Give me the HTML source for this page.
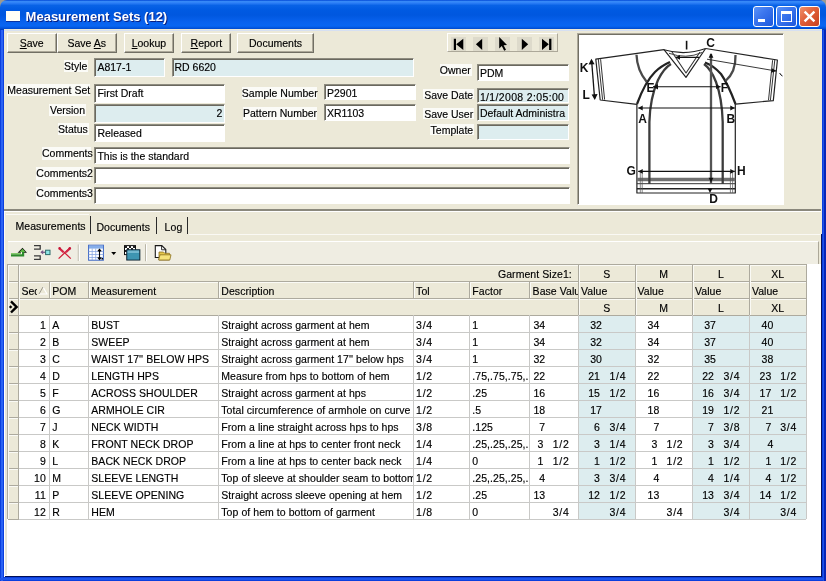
<!DOCTYPE html>
<html><head><meta charset="utf-8">
<style>
*{box-sizing:border-box}
html,body{margin:0;padding:0}
body{width:826px;height:581px;overflow:hidden;position:relative;background:#0B3FDE;font-family:"Liberation Sans",sans-serif;font-size:10.5px;color:#000}
.a{position:absolute}
#title{left:0;top:0;width:826px;height:29.6px;border-radius:7px 7px 0 0;background:linear-gradient(to bottom,#0047D6 0px,#3A8DF9 1.6px,#2C7EF6 3px,#0862E6 5.5px,#005AE2 10px,#0057DF 15px,#0862EE 22px,#0866F2 26px,#0052DA 28.3px,#003CB8 29.6px);}
#ttext{left:25.6px;top:9.3px;color:#fff;-webkit-text-stroke:0;font-weight:bold;font-size:13px;text-shadow:1px 1px 0 #0A1F80;white-space:nowrap}
#client{left:4px;top:29px;width:818px;height:548px;background:#ECE9D8}
.btn{height:19.5px;top:33.2px;background:#ECE9D8;border-top:1px solid #fff;border-left:1px solid #fff;border-right:1px solid #716F64;border-bottom:1px solid #716F64;box-shadow:inset -1px -1px 0 #ACA899;text-align:center;line-height:18.5px;white-space:nowrap}
.lbl{background:#FBFBF7;white-space:nowrap;text-align:right;line-height:12px;padding-right:1px;padding-top:0px}
.inp{background:#fff;border-top:1px solid #8E8C80;border-left:1px solid #8E8C80;border-bottom:1px solid #FFFFFF;border-right:1px solid #fff;box-shadow:inset 1px 1px 0 #6A685E;white-space:nowrap;overflow:hidden;padding-left:2px;line-height:16px}
.blue{background:#DDEDEF}
.gt{white-space:nowrap;line-height:12px;letter-spacing:0.06px}
body{-webkit-text-stroke:0.15px #000}
.ctl{top:6px;width:21px;height:21px;border:1px solid #fff;border-radius:3px}
</style></head><body><div class="a" style="left:0;top:0;width:826px;height:581px;overflow:hidden;will-change:transform">
<div class="a" style="left:0;top:0;width:8px;height:8px;background:#9C9A90"></div><div class="a" style="left:818px;top:0;width:8px;height:8px;background:#9C9A90"></div><div id="title" class="a"></div><div class="a" style="left:6px;top:10.8px;width:14.4px;height:10.3px;background:#FFFFF6;box-shadow:0 0.8px 0 #0A2A90"></div>
<div id="ttext" class="a">Measurement Sets (12)</div>
<div class="a ctl" style="left:753px;background:linear-gradient(135deg,#5B93F8 0%,#3C76EE 40%,#1D58DC 100%)"><div class="a" style="left:3.6px;top:12px;width:7.5px;height:3px;background:#fff"></div></div>
<div class="a ctl" style="left:776px;background:linear-gradient(135deg,#5B93F8 0%,#3C76EE 40%,#1D58DC 100%)"><div class="a" style="left:4px;top:4px;width:11px;height:11px;border:1px solid #fff;border-top-width:3px"></div></div>
<div class="a ctl" style="left:799px;background:linear-gradient(135deg,#F0906A 0%,#E0603A 45%,#C8401E 100%)"><svg class="a" style="left:0;top:0" width="19" height="19"><path d="M4.6 4.6 L14.4 14.4 M14.4 4.6 L4.6 14.4" stroke="#fff" stroke-width="2.4"/></svg></div>
<div class="a" style="left:1px;top:30px;width:1.5px;height:551px;background:#2A62F4"></div>
<div class="a" style="left:822.6px;top:30px;width:1.6px;height:551px;background:#1E52E6"></div>
<div class="a" style="left:0;top:578px;width:826px;height:1.5px;background:#1E55EC"></div>
<div id="client" class="a"></div>
<div class="a" style="left:4px;top:29.6px;width:818px;height:1.2px;background:#D6E0F2"></div>
<div class="a" style="left:4px;top:575.6px;width:818px;height:1.4px;background:#00105A"></div>
<div class="a" style="left:819.6px;top:264px;width:1.2px;height:312px;background:#C4C0B4"></div>
<div class="a" style="left:820.8px;top:234px;width:1.2px;height:343px;background:#00105A"></div>
<div class="a" style="left:824.4px;top:30px;width:1.6px;height:551px;background:#0626B8"></div>
<div class="a btn" style="left:7px;width:49.50px"><u>S</u>ave</div>
<div class="a btn" style="left:57px;width:59.50px">Save <u>A</u>s</div>
<div class="a btn" style="left:123.8px;width:50.20px"><u>L</u>ookup</div>
<div class="a btn" style="left:181.4px;width:49.90px"><u>R</u>eport</div>
<div class="a btn" style="left:237.3px;width:76.50px">Documents</div>
<div class="a lbl" style="left:64px;top:59.6px;width:23.50px;height:12.70px">Style</div>
<div class="a inp blue" style="left:94.4px;top:57.6px;width:70.60px;height:19.20px;">A817-1</div>
<div class="a inp blue" style="left:171.5px;top:57.6px;width:242.00px;height:19.20px;">RD 6620</div>
<div class="a lbl" style="left:7.3px;top:83.6px;width:82.70px;height:12.40px">Measurement Set</div>
<div class="a inp " style="left:94.4px;top:83.5px;width:130.90px;height:19.20px;">First Draft</div>
<div class="a lbl" style="left:49.4px;top:103.8px;width:36.60px;height:12.30px">Version</div>
<div class="a inp blue" style="left:94.4px;top:103.8px;width:130.90px;height:19.20px;text-align:right;padding-right:2px">2</div>
<div class="a lbl" style="left:58px;top:123.1px;width:30.70px;height:12.40px">Status</div>
<div class="a inp " style="left:94.4px;top:123.6px;width:130.90px;height:18.90px;">Released</div>
<div class="a lbl" style="left:42px;top:147px;width:48.70px;height:12.70px">Comments</div>
<div class="a inp " style="left:94.4px;top:147.4px;width:475.60px;height:16.90px;">This is the standard</div>
<div class="a lbl" style="left:36.3px;top:167px;width:54.40px;height:12.70px">Comments2</div>
<div class="a inp " style="left:94.4px;top:167.2px;width:475.60px;height:16.80px;"></div>
<div class="a lbl" style="left:36.3px;top:187px;width:54.40px;height:12.70px">Comments3</div>
<div class="a inp " style="left:94.4px;top:187px;width:475.60px;height:17.40px;"></div>
<div class="a lbl" style="left:241.8px;top:87.1px;width:75.20px;height:11.90px">Sample Number</div>
<div class="a inp " style="left:324px;top:83.5px;width:91.60px;height:16.90px;">P2901</div>
<div class="a lbl" style="left:243px;top:106.5px;width:74.00px;height:13.30px">Pattern Number</div>
<div class="a inp " style="left:324px;top:103.6px;width:91.60px;height:17.40px;">XR1103</div>
<div class="a lbl" style="left:439.8px;top:64.3px;width:31.90px;height:11.30px">Owner</div>
<div class="a inp " style="left:476.9px;top:63.6px;width:92.00px;height:17.70px;">PDM</div>
<div class="a lbl" style="left:423.4px;top:89px;width:50.80px;height:10.20px">Save Date</div>
<div class="a inp blue" style="left:476.9px;top:88px;width:92.00px;height:15.40px;letter-spacing:0.35px">1/1/2008 2:05:00</div>
<div class="a lbl" style="left:423.4px;top:107.5px;width:50.80px;height:11.30px">Save User</div>
<div class="a inp blue" style="left:476.9px;top:104.4px;width:92.00px;height:16.50px;">Default Administra</div>
<div class="a lbl" style="left:429.5px;top:124px;width:44.70px;height:11.30px">Template</div>
<div class="a inp blue" style="left:476.9px;top:124px;width:92.00px;height:16.40px;"></div><!-- image panel -->
<div class="a" style="left:577px;top:33px;width:206.5px;height:172px;background:#FFFFFF;border-top:1px solid #ACA899;border-left:1px solid #ACA899;border-right:1px solid #fff;border-bottom:1px solid #fff;box-shadow:inset 1px 1px 0 #716F64"></div>
<!-- nav bar -->
<div class="a" style="left:447px;top:33px;width:110.7px;height:19.4px;border-top:1px solid #fff;border-left:1px solid #fff;border-right:1px solid #ACA899;border-bottom:1px solid #ACA899"></div>
<div class="a" style="left:450.7px;top:37px;width:15.3px;height:14.3px;background:#DDDACB"></div>
<div class="a" style="left:472.7px;top:37px;width:15.3px;height:14.3px;background:#DDDACB"></div>
<div class="a" style="left:495px;top:37px;width:15.3px;height:14.3px;background:#DDDACB"></div>
<div class="a" style="left:517px;top:37px;width:15.3px;height:14.3px;background:#DDDACB"></div>
<div class="a" style="left:539px;top:37px;width:15.3px;height:14.3px;background:#DDDACB"></div>
<svg class="a" style="left:0;top:0" width="826" height="60">
<path d="M453.8 38.7 H456 V50 H453.8 Z M456.2 44.3 L463.3 38.7 V50 Z" fill="#000"/>
<path d="M475.9 44.3 L482.2 38.7 V50 Z" fill="#000"/>
<path d="M499.2 37 L499.2 48.5 L501.8 46 L504.2 50.8 L506 49.8 L503.6 45.2 L507 45 Z" fill="#000"/>
<path d="M528.2 44.3 L521.8 38.7 V50 Z" fill="#000"/>
<path d="M542 38.7 L548.8 44.3 L542 50 Z M549.1 38.7 H551.4 V50 H549.1 Z" fill="#000"/>
</svg>
<!-- splitter -->
<div class="a" style="left:4px;top:209.3px;width:817px;height:1.4px;background:#8A887C"></div>
<div class="a" style="left:4px;top:210.8px;width:817px;height:1px;background:#FFFFFF"></div>
<!-- tabs -->
<div class="a" style="left:6px;top:214.3px;width:83px;height:1px;background:#FAF9F4"></div>
<div class="a gt" style="left:15.5px;top:219.7px">Measurements</div>
<div class="a" style="left:89.5px;top:215.6px;width:1.2px;height:18.7px;background:#2A2A2A"></div>
<div class="a gt" style="left:96.4px;top:221.2px">Documents</div>
<div class="a" style="left:155.6px;top:217.3px;width:1.2px;height:17px;background:#2A2A2A"></div>
<div class="a gt" style="left:164.6px;top:221.2px">Log</div>
<div class="a" style="left:187.1px;top:217.3px;width:1.2px;height:17px;background:#2A2A2A"></div>
<div class="a" style="left:188.5px;top:233.8px;width:632px;height:1px;background:#FAF9F4"></div>
<div class="a" style="left:4px;top:212px;width:1.2px;height:365px;background:#FAF9F4"></div>
<!-- toolbar -->
<div class="a" style="left:7.6px;top:241px;width:811.5px;height:23.8px;background:#EFEDE2;border-top:1px solid #fff;border-right:1px solid #ACA899;border-bottom:1px solid #B8B5A8"></div>
<svg class="a" style="left:0;top:240px" width="200" height="26">
<!-- green arrow: bar + stem + chevron head -->
<path d="M11 14.2 H22 V11.2 H24.2 V16.5 H11 Z" fill="#2C8A2C"/>
<path d="M11 14.2 H21 V13.2 H11 Z" fill="#6CC050"/>
<path d="M17.6 12.8 L22.5 7.8 L27 12.8 L24.3 12.8 L22.5 10.6 L20.6 12.8 Z" fill="#111"/>
<path d="M19.4 12 L22.5 8.8 L25.6 12 Z" fill="#5DB845"/>
<!-- merge icon -->
<path d="M34 5.6 H40.2 V9.2 H34 M34 15.8 H40.2 V19.4 H34" fill="none" stroke="#3A3A3A" stroke-width="1.3"/>
<path d="M41 12.3 H45.5" stroke="#7A5A8A" stroke-width="1.3"/>
<path d="M40.3 12.3 L43.2 10 V14.6 Z" fill="#7A5A8A"/>
<rect x="45.6" y="10.2" width="4.4" height="4.4" fill="#8EE6E6" stroke="#2C6A6A" stroke-width="1"/>
<!-- red X pins -->
<path d="M58.6 18.6 L70.2 7.6 M70.8 18.6 L59.2 7.6" stroke="#D0203A" stroke-width="1.3"/>
<path d="M59.8 8.8 L63.5 12.3 M69.6 8.8 L65.9 12.3" stroke="#D42848" stroke-width="2.2"/>
<circle cx="59.6" cy="8.4" r="1.3" fill="#C8183A"/><circle cx="69.8" cy="8.4" r="1.3" fill="#C8183A"/>
<!-- separator -->
<rect x="77.8" y="4.5" width="1" height="16.5" fill="#B8B5A6"/><rect x="78.8" y="4.5" width="1" height="16.5" fill="#FFFFFF"/>
<!-- table icon -->
<rect x="88.6" y="5.2" width="14.8" height="15" fill="#FFFFFF" stroke="#3A64C4" stroke-width="1"/>
<rect x="89" y="5.6" width="14" height="3" fill="#86AEEA"/>
<path d="M88.6 11.5 H103.4 M88.6 14.5 H103.4 M88.6 17.5 H103.4 M92.2 8.6 V20.2 M95.7 8.6 V20.2" stroke="#7C9EE0" stroke-width="0.7"/>
<path d="M99.5 9.5 V19 M97.8 11.3 L99.5 9.3 L101.2 11.3 M97.8 17.3 L99.5 19.3 L101.2 17.3" fill="none" stroke="#000" stroke-width="1.1"/>
<rect x="101.5" y="18" width="1.5" height="1.5" fill="#000"/>
<!-- dropdown -->
<path d="M111.2 11.9 H116.2 L113.7 15 Z" fill="#000"/>
<!-- window icon -->
<rect x="124.5" y="5.6" width="11" height="9" fill="#FFFFFF" stroke="#111" stroke-width="1"/>
<path d="M125 6 h2 v2 h-2z M129 6 h2 v2 h-2z M133 6 h2 v2 h-2z M127 8 h2 v2 h-2z M131 8 h2 v2 h-2z M125 10 h2 v2 h-2z M129 10 h2 v2 h-2z M133 10 h2 v2 h-2z M127 12 h2 v2 h-2z M131 12 h2 v2 h-2z" fill="#222"/>
<rect x="126.8" y="9.8" width="13" height="10.2" fill="#2F7F9C" stroke="#112838" stroke-width="1.1"/>
<rect x="127.5" y="10.5" width="11.6" height="2.6" fill="#74B8D0"/>
<rect x="127.5" y="13.1" width="11.6" height="6.3" fill="#3E95B2"/>
<!-- separator -->
<rect x="145" y="4.2" width="1" height="17" fill="#B8B5A6"/><rect x="146" y="4.2" width="1" height="17" fill="#FFFFFF"/>
<!-- doc + folder icon -->
<path d="M155.3 5.6 H161.8 L165.8 9.6 V17.5 H155.3 Z" fill="#FFFFFF" stroke="#1A1A1A" stroke-width="1.1"/>
<path d="M161.6 5.8 V9.8 H165.6" fill="none" stroke="#1A1A1A" stroke-width="0.9"/>
<path d="M159 12 H163.5 L164.8 13.3 H169.5 V20 H159 Z" fill="#E6C64A" stroke="#8A7020" stroke-width="0.8"/>
<path d="M158.6 20 L160 14.8 H171 L169.8 20 Z" fill="#F6E27A" stroke="#8A7020" stroke-width="0.8"/>
</svg>
<svg class="a" style="left:578px;top:34px" width="204.5" height="171" viewBox="578 34 204.5 171">
<g fill="none" stroke-linejoin="round" stroke-linecap="butt">
<!-- left sleeve -->
<path d="M664 49.7 L595.8 59.2 L600.2 100 L636.8 104.3" stroke="#222" stroke-width="1.2"/>
<path d="M598.3 59 L602.6 99.8 M600.6 59.2 L604.6 99.6" stroke="#333" stroke-width="1"/>
<!-- right sleeve -->
<path d="M705.6 48.5 L777.4 60 L773.3 100.6 L735.5 104.2" stroke="#222" stroke-width="1.2"/>
<path d="M774.8 60 L770.4 100.4 M772.6 60.2 L768.5 100.2" stroke="#333" stroke-width="1"/>
<!-- body sides -->
<path d="M636.9 104 V193 H735.3 V104" stroke="#222" stroke-width="1.2"/>
<!-- hem -->
<path d="M636.9 179.5 H735.3" stroke="#707070" stroke-width="3.4"/>
<path d="M636.9 183.7 H735.3" stroke="#333" stroke-width="1"/>
<path d="M636.9 188.8 H735.3" stroke="#222" stroke-width="1.5"/>
<path d="M640.3 172 V193 M642.2 172 V193 M730.4 172 V193 M732.6 172 V193" stroke="#555" stroke-width="0.7"/>
<!-- inner verticals -->
<path d="M649.4 184 V122 Q650 98 658 80 Q664 68 671 64" stroke="#3C3C3C" stroke-width="2.3"/>
<path d="M722.7 184 V122 Q722 98 716 82 Q711 69 704 64" stroke="#3C3C3C" stroke-width="2.3"/>
<!-- armhole curves -->
<path d="M637 104 Q645 82 655 72 Q661 66 670 62" stroke="#222" stroke-width="2.2"/>
<path d="M735.5 104 Q728 84 721 74 Q714 66 705 62.5" stroke="#222" stroke-width="2.2"/>
<!-- sleeve seams -->
<path d="M636.5 54.7 Q637 70 646.8 82" stroke="#4A4A4A" stroke-width="2.3"/>
<path d="M735.5 55 Q736 72 725.5 81" stroke="#4A4A4A" stroke-width="2.3"/>
<!-- collar -->
<path d="M664 49.7 L686 77.3 L705.6 48.5" stroke="#222" stroke-width="1.2"/>
<path d="M672 52 L686 73 L700 52" stroke="#333" stroke-width="1.1"/>
<path d="M664 49.7 Q685 56 705.6 48.5" stroke="#222" stroke-width="1.1"/>
<path d="M669 53.3 Q686 59.5 702 52.5" stroke="#444" stroke-width="1"/>
<!-- C line -->
<path d="M711 54 V183" stroke="#777" stroke-width="2.4"/>
<path d="M711 54 V183" stroke="#222" stroke-width="0.8"/>
<!-- J line -->
<path d="M707 59.2 L776 71" stroke="#222" stroke-width="0.9"/>
<!-- K arrow -->
<path d="M591.6 60.5 L594.6 98.5" stroke="#111" stroke-width="1.3"/>
<!-- horizontal arrows -->
<path d="M653 86.7 H720.6 M638.2 108 H734.8 M638.2 171.4 H734.8 M676 57.4 H699" stroke="#111" stroke-width="1.1"/>
</g>
<g fill="#111">
<!-- arrowheads -->
<path d="M653 86.7 L658 84 V89.4 Z M720.6 86.7 L716.1 84.3 V89.1 Z"/>
<path d="M638.2 108 L642.7 105.6 V110.4 Z M734.8 108 L730.3 105.6 V110.4 Z"/>
<path d="M638.2 171.4 L642.7 169 V173.8 Z M734.8 171.4 L730.3 169 V173.8 Z"/>
<path d="M675.5 57.4 L680 55 V59.8 Z"/>
<path d="M711 53 L708.6 57.8 H713.4 Z M711 182.5 L708.6 177.8 H713.4 Z M710 193 L707.6 188.3 H712.4 Z"/>
<path d="M591.4 58.8 L588.6 64.6 L594.6 64.2 Z M594.8 100 L591.6 94.4 L597.6 94 Z"/>
<path d="M776.5 71 L771.9 68.3 L771.2 72.8 Z"/>
</g>
<g font-family="Liberation Sans" font-weight="bold" font-size="12px" fill="#111">
<text x="579.8" y="72.4">K</text>
<text x="582.6" y="98.8">L</text>
<text x="646.5" y="92">E</text>
<text x="720.8" y="92">F</text>
<text x="638.2" y="122.8">A</text>
<text x="726.5" y="122.8">B</text>
<text x="626.6" y="175.4">G</text>
<text x="737" y="175.4">H</text>
<text x="709.3" y="203.3">D</text>
<text x="706.3" y="47.2">C</text>
</g>
<path d="M686.6 40.8 V49.5" stroke="#111" stroke-width="1.6"/>
<path d="M779.6 73 Q781 75.5 782.5 76" stroke="#111" stroke-width="1" fill="none"/>
</svg>
<div class="a" style="left:4px;top:264px;width:817px;height:311.6px;background:#FFFFFF"></div>
<div class="a" style="left:5px;top:264px;width:1.5px;height:311px;background:#E6E4DA"></div>
<div class="a" style="left:578.5px;top:315.4px;width:56.5px;height:204.0px;background:#DDEDEF"></div>
<div class="a" style="left:692.5px;top:315.4px;width:56.89999999999998px;height:204.0px;background:#DDEDEF"></div>
<div class="a" style="left:749.4px;top:315.4px;width:56.80000000000007px;height:204.0px;background:#DDEDEF"></div>
<div class="a" style="left:7.7px;top:264.2px;width:10.900000000000002px;height:255.2px;background:#ECE9D8"></div>
<div class="a" style="left:18.6px;top:264.2px;width:787.6px;height:51.19999999999999px;background:#ECE9D8"></div>
<div class="a" style="left:7.7px;top:263.7px;width:798.5px;height:1px;background:#ADAA9E"></div>
<div class="a" style="left:8.7px;top:264.7px;width:797.5px;height:1px;background:#FAFAF5"></div>
<div class="a" style="left:7.7px;top:281.0px;width:798.5px;height:1px;background:#ADAA9E"></div>
<div class="a" style="left:8.7px;top:282.0px;width:797.5px;height:1px;background:#FAFAF5"></div>
<div class="a" style="left:7.7px;top:297.8px;width:798.5px;height:1px;background:#ADAA9E"></div>
<div class="a" style="left:8.7px;top:298.8px;width:797.5px;height:1px;background:#FAFAF5"></div>
<div class="a" style="left:7.7px;top:314.9px;width:798.5px;height:1px;background:#ADAA9E"></div>
<div class="a" style="left:7.7px;top:331.9px;width:10.900000000000002px;height:1px;background:#ADAA9E"></div>
<div class="a" style="left:18.6px;top:331.9px;width:787.6px;height:1px;background:#C9C9C7"></div>
<div class="a" style="left:8.7px;top:332.9px;width:9.400000000000002px;height:1px;background:#FAFAF5"></div>
<div class="a" style="left:7.7px;top:348.9px;width:10.900000000000002px;height:1px;background:#ADAA9E"></div>
<div class="a" style="left:18.6px;top:348.9px;width:787.6px;height:1px;background:#C9C9C7"></div>
<div class="a" style="left:8.7px;top:349.9px;width:9.400000000000002px;height:1px;background:#FAFAF5"></div>
<div class="a" style="left:7.7px;top:365.9px;width:10.900000000000002px;height:1px;background:#ADAA9E"></div>
<div class="a" style="left:18.6px;top:365.9px;width:787.6px;height:1px;background:#C9C9C7"></div>
<div class="a" style="left:8.7px;top:366.9px;width:9.400000000000002px;height:1px;background:#FAFAF5"></div>
<div class="a" style="left:7.7px;top:382.9px;width:10.900000000000002px;height:1px;background:#ADAA9E"></div>
<div class="a" style="left:18.6px;top:382.9px;width:787.6px;height:1px;background:#C9C9C7"></div>
<div class="a" style="left:8.7px;top:383.9px;width:9.400000000000002px;height:1px;background:#FAFAF5"></div>
<div class="a" style="left:7.7px;top:399.9px;width:10.900000000000002px;height:1px;background:#ADAA9E"></div>
<div class="a" style="left:18.6px;top:399.9px;width:787.6px;height:1px;background:#C9C9C7"></div>
<div class="a" style="left:8.7px;top:400.9px;width:9.400000000000002px;height:1px;background:#FAFAF5"></div>
<div class="a" style="left:7.7px;top:416.9px;width:10.900000000000002px;height:1px;background:#ADAA9E"></div>
<div class="a" style="left:18.6px;top:416.9px;width:787.6px;height:1px;background:#C9C9C7"></div>
<div class="a" style="left:8.7px;top:417.9px;width:9.400000000000002px;height:1px;background:#FAFAF5"></div>
<div class="a" style="left:7.7px;top:433.9px;width:10.900000000000002px;height:1px;background:#ADAA9E"></div>
<div class="a" style="left:18.6px;top:433.9px;width:787.6px;height:1px;background:#C9C9C7"></div>
<div class="a" style="left:8.7px;top:434.9px;width:9.400000000000002px;height:1px;background:#FAFAF5"></div>
<div class="a" style="left:7.7px;top:450.9px;width:10.900000000000002px;height:1px;background:#ADAA9E"></div>
<div class="a" style="left:18.6px;top:450.9px;width:787.6px;height:1px;background:#C9C9C7"></div>
<div class="a" style="left:8.7px;top:451.9px;width:9.400000000000002px;height:1px;background:#FAFAF5"></div>
<div class="a" style="left:7.7px;top:467.9px;width:10.900000000000002px;height:1px;background:#ADAA9E"></div>
<div class="a" style="left:18.6px;top:467.9px;width:787.6px;height:1px;background:#C9C9C7"></div>
<div class="a" style="left:8.7px;top:468.9px;width:9.400000000000002px;height:1px;background:#FAFAF5"></div>
<div class="a" style="left:7.7px;top:484.9px;width:10.900000000000002px;height:1px;background:#ADAA9E"></div>
<div class="a" style="left:18.6px;top:484.9px;width:787.6px;height:1px;background:#C9C9C7"></div>
<div class="a" style="left:8.7px;top:485.9px;width:9.400000000000002px;height:1px;background:#FAFAF5"></div>
<div class="a" style="left:7.7px;top:501.9px;width:10.900000000000002px;height:1px;background:#ADAA9E"></div>
<div class="a" style="left:18.6px;top:501.9px;width:787.6px;height:1px;background:#C9C9C7"></div>
<div class="a" style="left:8.7px;top:502.9px;width:9.400000000000002px;height:1px;background:#FAFAF5"></div>
<div class="a" style="left:7.7px;top:518.9px;width:10.900000000000002px;height:1px;background:#ADAA9E"></div>
<div class="a" style="left:18.6px;top:518.9px;width:787.6px;height:1px;background:#C9C9C7"></div>
<div class="a" style="left:7.2px;top:264.2px;width:1px;height:51.19999999999999px;background:#ADAA9E"></div>
<div class="a" style="left:8.2px;top:264.7px;width:1px;height:50.19999999999999px;background:#FAFAF5"></div>
<div class="a" style="left:7.2px;top:315.4px;width:1px;height:204.0px;background:#ADAA9E"></div>
<div class="a" style="left:8.2px;top:315.4px;width:1px;height:204.0px;background:#FAFAF5"></div>
<div class="a" style="left:18.1px;top:264.2px;width:1px;height:51.19999999999999px;background:#ADAA9E"></div>
<div class="a" style="left:19.1px;top:264.7px;width:1px;height:50.19999999999999px;background:#FAFAF5"></div>
<div class="a" style="left:18.1px;top:315.4px;width:1px;height:204.0px;background:#ADAA9E"></div>
<div class="a" style="left:49.0px;top:281.5px;width:1px;height:16.80000000000001px;background:#ADAA9E"></div>
<div class="a" style="left:50.0px;top:282.0px;width:1px;height:15.800000000000011px;background:#FAFAF5"></div>
<div class="a" style="left:49.0px;top:315.4px;width:1px;height:204.0px;background:#C9C9C7"></div>
<div class="a" style="left:88.0px;top:281.5px;width:1px;height:16.80000000000001px;background:#ADAA9E"></div>
<div class="a" style="left:89.0px;top:282.0px;width:1px;height:15.800000000000011px;background:#FAFAF5"></div>
<div class="a" style="left:88.0px;top:315.4px;width:1px;height:204.0px;background:#C9C9C7"></div>
<div class="a" style="left:218.0px;top:281.5px;width:1px;height:16.80000000000001px;background:#ADAA9E"></div>
<div class="a" style="left:219.0px;top:282.0px;width:1px;height:15.800000000000011px;background:#FAFAF5"></div>
<div class="a" style="left:218.0px;top:315.4px;width:1px;height:204.0px;background:#C9C9C7"></div>
<div class="a" style="left:412.8px;top:281.5px;width:1px;height:16.80000000000001px;background:#ADAA9E"></div>
<div class="a" style="left:413.8px;top:282.0px;width:1px;height:15.800000000000011px;background:#FAFAF5"></div>
<div class="a" style="left:412.8px;top:315.4px;width:1px;height:204.0px;background:#C9C9C7"></div>
<div class="a" style="left:469.0px;top:281.5px;width:1px;height:16.80000000000001px;background:#ADAA9E"></div>
<div class="a" style="left:470.0px;top:282.0px;width:1px;height:15.800000000000011px;background:#FAFAF5"></div>
<div class="a" style="left:469.0px;top:315.4px;width:1px;height:204.0px;background:#C9C9C7"></div>
<div class="a" style="left:529.3px;top:281.5px;width:1px;height:16.80000000000001px;background:#ADAA9E"></div>
<div class="a" style="left:530.3px;top:282.0px;width:1px;height:15.800000000000011px;background:#FAFAF5"></div>
<div class="a" style="left:529.3px;top:315.4px;width:1px;height:204.0px;background:#C9C9C7"></div>
<div class="a" style="left:578.0px;top:264.2px;width:1px;height:51.19999999999999px;background:#ADAA9E"></div>
<div class="a" style="left:579.0px;top:264.7px;width:1px;height:50.19999999999999px;background:#FAFAF5"></div>
<div class="a" style="left:578.0px;top:315.4px;width:1px;height:204.0px;background:#C9C9C7"></div>
<div class="a" style="left:634.5px;top:264.2px;width:1px;height:51.19999999999999px;background:#ADAA9E"></div>
<div class="a" style="left:635.5px;top:264.7px;width:1px;height:50.19999999999999px;background:#FAFAF5"></div>
<div class="a" style="left:634.5px;top:315.4px;width:1px;height:204.0px;background:#C9C9C7"></div>
<div class="a" style="left:692.0px;top:264.2px;width:1px;height:51.19999999999999px;background:#ADAA9E"></div>
<div class="a" style="left:693.0px;top:264.7px;width:1px;height:50.19999999999999px;background:#FAFAF5"></div>
<div class="a" style="left:692.0px;top:315.4px;width:1px;height:204.0px;background:#C9C9C7"></div>
<div class="a" style="left:748.9px;top:264.2px;width:1px;height:51.19999999999999px;background:#ADAA9E"></div>
<div class="a" style="left:749.9px;top:264.7px;width:1px;height:50.19999999999999px;background:#FAFAF5"></div>
<div class="a" style="left:748.9px;top:315.4px;width:1px;height:204.0px;background:#C9C9C7"></div>
<div class="a" style="left:805.7px;top:264.2px;width:1px;height:51.19999999999999px;background:#ADAA9E"></div>
<div class="a" style="left:805.7px;top:315.4px;width:1px;height:204.0px;background:#C9C9C7"></div>
<div class="a gt" style="left:18.6px;top:267.59999999999997px;width:553.1999999999999px;text-align:right">Garment Size1:</div>
<div class="a gt" style="left:578.5px;top:267.59999999999997px;width:56.5px;text-align:center">S</div>
<div class="a gt" style="left:578.5px;top:301.7px;width:56.5px;text-align:center">S</div>
<div class="a gt" style="left:581.0px;top:284.9px;">Value</div>
<div class="a gt" style="left:635.0px;top:267.59999999999997px;width:57.5px;text-align:center">M</div>
<div class="a gt" style="left:635.0px;top:301.7px;width:57.5px;text-align:center">M</div>
<div class="a gt" style="left:637.5px;top:284.9px;">Value</div>
<div class="a gt" style="left:692.5px;top:267.59999999999997px;width:56.89999999999998px;text-align:center">L</div>
<div class="a gt" style="left:692.5px;top:301.7px;width:56.89999999999998px;text-align:center">L</div>
<div class="a gt" style="left:695.0px;top:284.9px;">Value</div>
<div class="a gt" style="left:749.4px;top:267.59999999999997px;width:56.80000000000007px;text-align:center">XL</div>
<div class="a gt" style="left:749.4px;top:301.7px;width:56.80000000000007px;text-align:center">XL</div>
<div class="a gt" style="left:751.9px;top:284.9px;">Value</div>
<div class="a gt" style="left:21.400000000000002px;top:284.9px;width:15.2px;overflow:hidden">Seq</div>
<div class="a gt" style="left:52.3px;top:284.9px;width:36.2px;overflow:hidden">POM</div>
<div class="a gt" style="left:91.3px;top:284.9px;width:127.2px;overflow:hidden">Measurement</div>
<div class="a gt" style="left:221.3px;top:284.9px;width:192.0px;overflow:hidden">Description</div>
<div class="a gt" style="left:416.1px;top:284.9px;width:53.39999999999999px;overflow:hidden">Tol</div>
<div class="a gt" style="left:472.3px;top:284.9px;width:57.49999999999996px;overflow:hidden">Factor</div>
<div class="a gt" style="left:532.5999999999999px;top:284.9px;width:45.90000000000005px;overflow:hidden">Base Value</div>
<svg class="a" style="left:38px;top:286px" width="10" height="9"><path d="M5 1 L9 8 L1 8" fill="none" stroke="#FFFFFF" stroke-width="1.2"/><path d="M1 8 L5 1" fill="none" stroke="#9A978A" stroke-width="1"/></svg>
<svg class="a" style="left:0px;top:296px" width="20" height="20"><path d="M11 5.3 L16.6 10.9 L11 16.5" fill="none" stroke="#000" stroke-width="2.4"/><path d="M10.6 9.2 L12.3 10.9 L10.6 12.6 L8.9 10.9 Z" fill="#000"/></svg>
<div class="a gt" style="left:18.6px;top:318.79999999999995px;width:27.299999999999997px;text-align:right">1</div>
<div class="a gt" style="left:52.3px;top:318.79999999999995px;width:36.2px;overflow:hidden">A</div>
<div class="a gt" style="left:91.3px;top:318.79999999999995px;width:127.2px;overflow:hidden">BUST</div>
<div class="a gt" style="left:221.3px;top:318.79999999999995px;width:192.0px;overflow:hidden">Straight across garment at hem</div>
<div class="a gt" style="left:416.1px;top:318.79999999999995px;letter-spacing:0.7px;width:53.39999999999999px;overflow:hidden">3/4</div>
<div class="a gt" style="left:472.3px;top:318.79999999999995px;width:57.49999999999996px;overflow:hidden">1</div>
<div class="a gt" style="left:505.20000000000005px;top:318.79999999999995px;width:40px;text-align:right">34</div>
<div class="a gt" style="left:562.0px;top:318.79999999999995px;width:40px;text-align:right">32</div>
<div class="a gt" style="left:619.3px;top:318.79999999999995px;width:40px;text-align:right">34</div>
<div class="a gt" style="left:676.0px;top:318.79999999999995px;width:40px;text-align:right">37</div>
<div class="a gt" style="left:733.3px;top:318.79999999999995px;width:40px;text-align:right">40</div>
<div class="a gt" style="left:18.6px;top:335.79999999999995px;width:27.299999999999997px;text-align:right">2</div>
<div class="a gt" style="left:52.3px;top:335.79999999999995px;width:36.2px;overflow:hidden">B</div>
<div class="a gt" style="left:91.3px;top:335.79999999999995px;width:127.2px;overflow:hidden">SWEEP</div>
<div class="a gt" style="left:221.3px;top:335.79999999999995px;width:192.0px;overflow:hidden">Straight across garment at hem</div>
<div class="a gt" style="left:416.1px;top:335.79999999999995px;letter-spacing:0.7px;width:53.39999999999999px;overflow:hidden">3/4</div>
<div class="a gt" style="left:472.3px;top:335.79999999999995px;width:57.49999999999996px;overflow:hidden">1</div>
<div class="a gt" style="left:505.20000000000005px;top:335.79999999999995px;width:40px;text-align:right">34</div>
<div class="a gt" style="left:562.0px;top:335.79999999999995px;width:40px;text-align:right">32</div>
<div class="a gt" style="left:619.3px;top:335.79999999999995px;width:40px;text-align:right">34</div>
<div class="a gt" style="left:676.0px;top:335.79999999999995px;width:40px;text-align:right">37</div>
<div class="a gt" style="left:733.3px;top:335.79999999999995px;width:40px;text-align:right">40</div>
<div class="a gt" style="left:18.6px;top:352.79999999999995px;width:27.299999999999997px;text-align:right">3</div>
<div class="a gt" style="left:52.3px;top:352.79999999999995px;width:36.2px;overflow:hidden">C</div>
<div class="a gt" style="left:91.3px;top:352.79999999999995px;width:127.2px;overflow:hidden">WAIST 17'' BELOW HPS</div>
<div class="a gt" style="left:221.3px;top:352.79999999999995px;width:192.0px;overflow:hidden">Straight across garment 17'' below hps</div>
<div class="a gt" style="left:416.1px;top:352.79999999999995px;letter-spacing:0.7px;width:53.39999999999999px;overflow:hidden">3/4</div>
<div class="a gt" style="left:472.3px;top:352.79999999999995px;width:57.49999999999996px;overflow:hidden">1</div>
<div class="a gt" style="left:505.20000000000005px;top:352.79999999999995px;width:40px;text-align:right">32</div>
<div class="a gt" style="left:562.0px;top:352.79999999999995px;width:40px;text-align:right">30</div>
<div class="a gt" style="left:619.3px;top:352.79999999999995px;width:40px;text-align:right">32</div>
<div class="a gt" style="left:676.0px;top:352.79999999999995px;width:40px;text-align:right">35</div>
<div class="a gt" style="left:733.3px;top:352.79999999999995px;width:40px;text-align:right">38</div>
<div class="a gt" style="left:18.6px;top:369.79999999999995px;width:27.299999999999997px;text-align:right">4</div>
<div class="a gt" style="left:52.3px;top:369.79999999999995px;width:36.2px;overflow:hidden">D</div>
<div class="a gt" style="left:91.3px;top:369.79999999999995px;width:127.2px;overflow:hidden">LENGTH HPS</div>
<div class="a gt" style="left:221.3px;top:369.79999999999995px;width:192.0px;overflow:hidden">Measure from hps to bottom of hem</div>
<div class="a gt" style="left:416.1px;top:369.79999999999995px;letter-spacing:0.7px;width:53.39999999999999px;overflow:hidden">1/2</div>
<div class="a gt" style="left:472.3px;top:369.79999999999995px;width:57.49999999999996px;overflow:hidden">.75,.75,.75,.</div>
<div class="a gt" style="left:505.20000000000005px;top:369.79999999999995px;width:40px;text-align:right">22</div>
<div class="a gt" style="left:560.0px;top:369.79999999999995px;width:40px;text-align:right">21</div>
<div class="a gt" style="left:609.5px;top:369.79999999999995px;letter-spacing:0.7px">1/4</div>
<div class="a gt" style="left:619.3px;top:369.79999999999995px;width:40px;text-align:right">22</div>
<div class="a gt" style="left:674.0px;top:369.79999999999995px;width:40px;text-align:right">22</div>
<div class="a gt" style="left:723.5px;top:369.79999999999995px;letter-spacing:0.7px">3/4</div>
<div class="a gt" style="left:731.3px;top:369.79999999999995px;width:40px;text-align:right">23</div>
<div class="a gt" style="left:780.3px;top:369.79999999999995px;letter-spacing:0.7px">1/2</div>
<div class="a gt" style="left:18.6px;top:386.79999999999995px;width:27.299999999999997px;text-align:right">5</div>
<div class="a gt" style="left:52.3px;top:386.79999999999995px;width:36.2px;overflow:hidden">F</div>
<div class="a gt" style="left:91.3px;top:386.79999999999995px;width:127.2px;overflow:hidden">ACROSS SHOULDER</div>
<div class="a gt" style="left:221.3px;top:386.79999999999995px;width:192.0px;overflow:hidden">Straight across garment at hps</div>
<div class="a gt" style="left:416.1px;top:386.79999999999995px;letter-spacing:0.7px;width:53.39999999999999px;overflow:hidden">1/2</div>
<div class="a gt" style="left:472.3px;top:386.79999999999995px;width:57.49999999999996px;overflow:hidden">.25</div>
<div class="a gt" style="left:505.20000000000005px;top:386.79999999999995px;width:40px;text-align:right">16</div>
<div class="a gt" style="left:560.0px;top:386.79999999999995px;width:40px;text-align:right">15</div>
<div class="a gt" style="left:609.5px;top:386.79999999999995px;letter-spacing:0.7px">1/2</div>
<div class="a gt" style="left:619.3px;top:386.79999999999995px;width:40px;text-align:right">16</div>
<div class="a gt" style="left:674.0px;top:386.79999999999995px;width:40px;text-align:right">16</div>
<div class="a gt" style="left:723.5px;top:386.79999999999995px;letter-spacing:0.7px">3/4</div>
<div class="a gt" style="left:731.3px;top:386.79999999999995px;width:40px;text-align:right">17</div>
<div class="a gt" style="left:780.3px;top:386.79999999999995px;letter-spacing:0.7px">1/2</div>
<div class="a gt" style="left:18.6px;top:403.79999999999995px;width:27.299999999999997px;text-align:right">6</div>
<div class="a gt" style="left:52.3px;top:403.79999999999995px;width:36.2px;overflow:hidden">G</div>
<div class="a gt" style="left:91.3px;top:403.79999999999995px;width:127.2px;overflow:hidden">ARMHOLE CIR</div>
<div class="a gt" style="left:221.3px;top:403.79999999999995px;width:192.0px;overflow:hidden">Total circumference of armhole on curve</div>
<div class="a gt" style="left:416.1px;top:403.79999999999995px;letter-spacing:0.7px;width:53.39999999999999px;overflow:hidden">1/2</div>
<div class="a gt" style="left:472.3px;top:403.79999999999995px;width:57.49999999999996px;overflow:hidden">.5</div>
<div class="a gt" style="left:505.20000000000005px;top:403.79999999999995px;width:40px;text-align:right">18</div>
<div class="a gt" style="left:562.0px;top:403.79999999999995px;width:40px;text-align:right">17</div>
<div class="a gt" style="left:619.3px;top:403.79999999999995px;width:40px;text-align:right">18</div>
<div class="a gt" style="left:674.0px;top:403.79999999999995px;width:40px;text-align:right">19</div>
<div class="a gt" style="left:723.5px;top:403.79999999999995px;letter-spacing:0.7px">1/2</div>
<div class="a gt" style="left:733.3px;top:403.79999999999995px;width:40px;text-align:right">21</div>
<div class="a gt" style="left:18.6px;top:420.79999999999995px;width:27.299999999999997px;text-align:right">7</div>
<div class="a gt" style="left:52.3px;top:420.79999999999995px;width:36.2px;overflow:hidden">J</div>
<div class="a gt" style="left:91.3px;top:420.79999999999995px;width:127.2px;overflow:hidden">NECK WIDTH</div>
<div class="a gt" style="left:221.3px;top:420.79999999999995px;width:192.0px;overflow:hidden">From a line straight across hps to hps</div>
<div class="a gt" style="left:416.1px;top:420.79999999999995px;letter-spacing:0.7px;width:53.39999999999999px;overflow:hidden">3/8</div>
<div class="a gt" style="left:472.3px;top:420.79999999999995px;width:57.49999999999996px;overflow:hidden">.125</div>
<div class="a gt" style="left:505.20000000000005px;top:420.79999999999995px;width:40px;text-align:right">7</div>
<div class="a gt" style="left:560.0px;top:420.79999999999995px;width:40px;text-align:right">6</div>
<div class="a gt" style="left:609.5px;top:420.79999999999995px;letter-spacing:0.7px">3/4</div>
<div class="a gt" style="left:619.3px;top:420.79999999999995px;width:40px;text-align:right">7</div>
<div class="a gt" style="left:674.0px;top:420.79999999999995px;width:40px;text-align:right">7</div>
<div class="a gt" style="left:723.5px;top:420.79999999999995px;letter-spacing:0.7px">3/8</div>
<div class="a gt" style="left:731.3px;top:420.79999999999995px;width:40px;text-align:right">7</div>
<div class="a gt" style="left:780.3px;top:420.79999999999995px;letter-spacing:0.7px">3/4</div>
<div class="a gt" style="left:18.6px;top:437.79999999999995px;width:27.299999999999997px;text-align:right">8</div>
<div class="a gt" style="left:52.3px;top:437.79999999999995px;width:36.2px;overflow:hidden">K</div>
<div class="a gt" style="left:91.3px;top:437.79999999999995px;width:127.2px;overflow:hidden">FRONT NECK DROP</div>
<div class="a gt" style="left:221.3px;top:437.79999999999995px;width:192.0px;overflow:hidden">From a line at hps to center front neck</div>
<div class="a gt" style="left:416.1px;top:437.79999999999995px;letter-spacing:0.7px;width:53.39999999999999px;overflow:hidden">1/4</div>
<div class="a gt" style="left:472.3px;top:437.79999999999995px;width:57.49999999999996px;overflow:hidden">.25,.25,.25,.</div>
<div class="a gt" style="left:503.4px;top:437.79999999999995px;width:40px;text-align:right">3</div>
<div class="a gt" style="left:552.8px;top:437.79999999999995px;letter-spacing:0.7px">1/2</div>
<div class="a gt" style="left:560.0px;top:437.79999999999995px;width:40px;text-align:right">3</div>
<div class="a gt" style="left:609.5px;top:437.79999999999995px;letter-spacing:0.7px">1/4</div>
<div class="a gt" style="left:617.3px;top:437.79999999999995px;width:40px;text-align:right">3</div>
<div class="a gt" style="left:666.6px;top:437.79999999999995px;letter-spacing:0.7px">1/2</div>
<div class="a gt" style="left:674.0px;top:437.79999999999995px;width:40px;text-align:right">3</div>
<div class="a gt" style="left:723.5px;top:437.79999999999995px;letter-spacing:0.7px">3/4</div>
<div class="a gt" style="left:733.3px;top:437.79999999999995px;width:40px;text-align:right">4</div>
<div class="a gt" style="left:18.6px;top:454.79999999999995px;width:27.299999999999997px;text-align:right">9</div>
<div class="a gt" style="left:52.3px;top:454.79999999999995px;width:36.2px;overflow:hidden">L</div>
<div class="a gt" style="left:91.3px;top:454.79999999999995px;width:127.2px;overflow:hidden">BACK NECK DROP</div>
<div class="a gt" style="left:221.3px;top:454.79999999999995px;width:192.0px;overflow:hidden">From a line at hps to center back neck</div>
<div class="a gt" style="left:416.1px;top:454.79999999999995px;letter-spacing:0.7px;width:53.39999999999999px;overflow:hidden">1/4</div>
<div class="a gt" style="left:472.3px;top:454.79999999999995px;width:57.49999999999996px;overflow:hidden">0</div>
<div class="a gt" style="left:503.4px;top:454.79999999999995px;width:40px;text-align:right">1</div>
<div class="a gt" style="left:552.8px;top:454.79999999999995px;letter-spacing:0.7px">1/2</div>
<div class="a gt" style="left:560.0px;top:454.79999999999995px;width:40px;text-align:right">1</div>
<div class="a gt" style="left:609.5px;top:454.79999999999995px;letter-spacing:0.7px">1/2</div>
<div class="a gt" style="left:617.3px;top:454.79999999999995px;width:40px;text-align:right">1</div>
<div class="a gt" style="left:666.6px;top:454.79999999999995px;letter-spacing:0.7px">1/2</div>
<div class="a gt" style="left:674.0px;top:454.79999999999995px;width:40px;text-align:right">1</div>
<div class="a gt" style="left:723.5px;top:454.79999999999995px;letter-spacing:0.7px">1/2</div>
<div class="a gt" style="left:731.3px;top:454.79999999999995px;width:40px;text-align:right">1</div>
<div class="a gt" style="left:780.3px;top:454.79999999999995px;letter-spacing:0.7px">1/2</div>
<div class="a gt" style="left:18.6px;top:471.79999999999995px;width:27.299999999999997px;text-align:right">10</div>
<div class="a gt" style="left:52.3px;top:471.79999999999995px;width:36.2px;overflow:hidden">M</div>
<div class="a gt" style="left:91.3px;top:471.79999999999995px;width:127.2px;overflow:hidden">SLEEVE LENGTH</div>
<div class="a gt" style="left:221.3px;top:471.79999999999995px;width:192.0px;overflow:hidden">Top of sleeve at shoulder seam to bottom</div>
<div class="a gt" style="left:416.1px;top:471.79999999999995px;letter-spacing:0.7px;width:53.39999999999999px;overflow:hidden">1/2</div>
<div class="a gt" style="left:472.3px;top:471.79999999999995px;width:57.49999999999996px;overflow:hidden">.25,.25,.25,.</div>
<div class="a gt" style="left:505.20000000000005px;top:471.79999999999995px;width:40px;text-align:right">4</div>
<div class="a gt" style="left:560.0px;top:471.79999999999995px;width:40px;text-align:right">3</div>
<div class="a gt" style="left:609.5px;top:471.79999999999995px;letter-spacing:0.7px">3/4</div>
<div class="a gt" style="left:619.3px;top:471.79999999999995px;width:40px;text-align:right">4</div>
<div class="a gt" style="left:674.0px;top:471.79999999999995px;width:40px;text-align:right">4</div>
<div class="a gt" style="left:723.5px;top:471.79999999999995px;letter-spacing:0.7px">1/4</div>
<div class="a gt" style="left:731.3px;top:471.79999999999995px;width:40px;text-align:right">4</div>
<div class="a gt" style="left:780.3px;top:471.79999999999995px;letter-spacing:0.7px">1/2</div>
<div class="a gt" style="left:18.6px;top:488.79999999999995px;width:27.299999999999997px;text-align:right">11</div>
<div class="a gt" style="left:52.3px;top:488.79999999999995px;width:36.2px;overflow:hidden">P</div>
<div class="a gt" style="left:91.3px;top:488.79999999999995px;width:127.2px;overflow:hidden">SLEEVE OPENING</div>
<div class="a gt" style="left:221.3px;top:488.79999999999995px;width:192.0px;overflow:hidden">Straight across sleeve opening at hem</div>
<div class="a gt" style="left:416.1px;top:488.79999999999995px;letter-spacing:0.7px;width:53.39999999999999px;overflow:hidden">1/2</div>
<div class="a gt" style="left:472.3px;top:488.79999999999995px;width:57.49999999999996px;overflow:hidden">.25</div>
<div class="a gt" style="left:505.20000000000005px;top:488.79999999999995px;width:40px;text-align:right">13</div>
<div class="a gt" style="left:560.0px;top:488.79999999999995px;width:40px;text-align:right">12</div>
<div class="a gt" style="left:609.5px;top:488.79999999999995px;letter-spacing:0.7px">1/2</div>
<div class="a gt" style="left:619.3px;top:488.79999999999995px;width:40px;text-align:right">13</div>
<div class="a gt" style="left:674.0px;top:488.79999999999995px;width:40px;text-align:right">13</div>
<div class="a gt" style="left:723.5px;top:488.79999999999995px;letter-spacing:0.7px">3/4</div>
<div class="a gt" style="left:731.3px;top:488.79999999999995px;width:40px;text-align:right">14</div>
<div class="a gt" style="left:780.3px;top:488.79999999999995px;letter-spacing:0.7px">1/2</div>
<div class="a gt" style="left:18.6px;top:505.79999999999995px;width:27.299999999999997px;text-align:right">12</div>
<div class="a gt" style="left:52.3px;top:505.79999999999995px;width:36.2px;overflow:hidden">R</div>
<div class="a gt" style="left:91.3px;top:505.79999999999995px;width:127.2px;overflow:hidden">HEM</div>
<div class="a gt" style="left:221.3px;top:505.79999999999995px;width:192.0px;overflow:hidden">Top of hem to bottom of garment</div>
<div class="a gt" style="left:416.1px;top:505.79999999999995px;letter-spacing:0.7px;width:53.39999999999999px;overflow:hidden">1/8</div>
<div class="a gt" style="left:472.3px;top:505.79999999999995px;width:57.49999999999996px;overflow:hidden">0</div>
<div class="a gt" style="left:552.8px;top:505.79999999999995px;letter-spacing:0.7px">3/4</div>
<div class="a gt" style="left:609.5px;top:505.79999999999995px;letter-spacing:0.7px">3/4</div>
<div class="a gt" style="left:666.6px;top:505.79999999999995px;letter-spacing:0.7px">3/4</div>
<div class="a gt" style="left:723.5px;top:505.79999999999995px;letter-spacing:0.7px">3/4</div>
<div class="a gt" style="left:780.3px;top:505.79999999999995px;letter-spacing:0.7px">3/4</div></div></body></html>
